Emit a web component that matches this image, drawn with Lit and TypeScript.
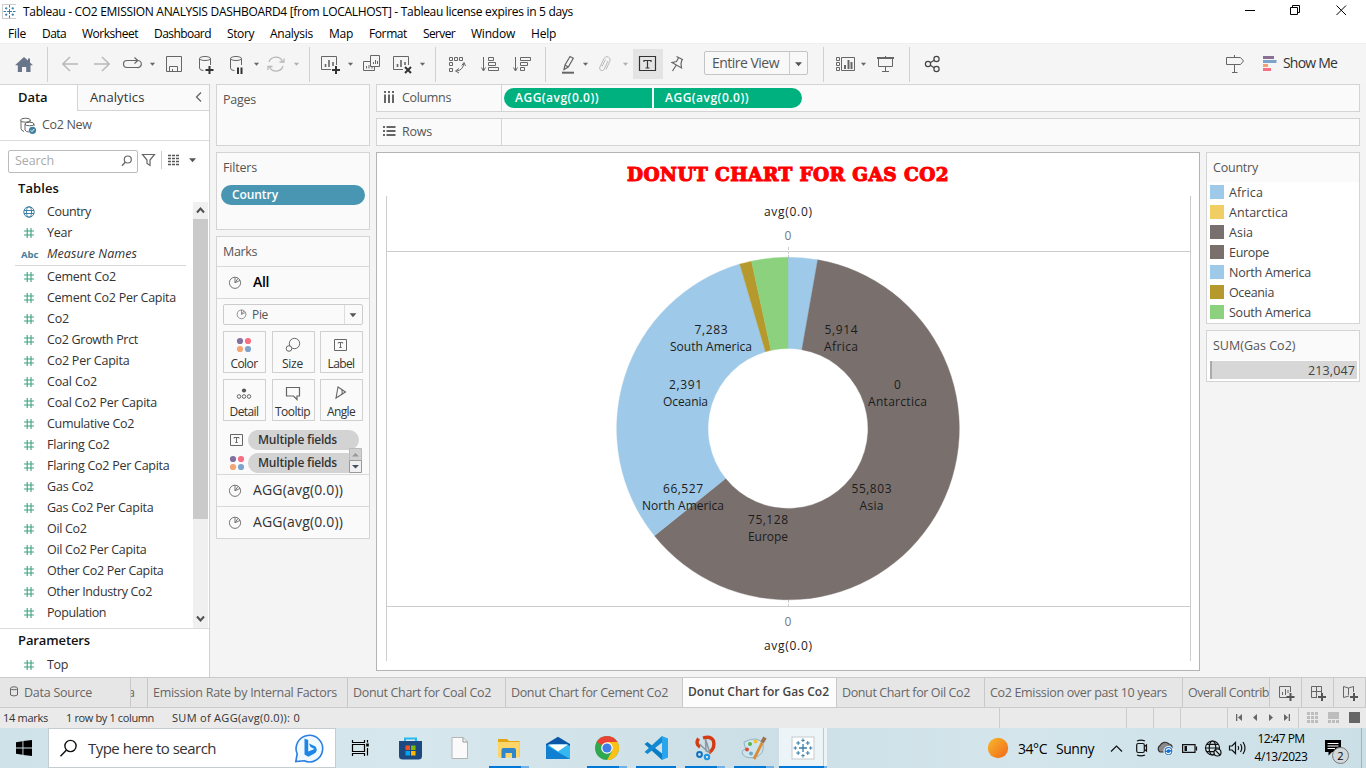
import { LitElement, html, svg, css } from "lit";
import { customElement } from "lit/decorators.js";

/** Text run fitted to a given advance width. */
const t = (text: string, w: number, cls = "") => html`<span class="t ${cls}" data-w=${w}>${text}</span>`;

/** Icon drawn on the window's coordinate grid. */
const ic = (x: number, y: number, w: number, h: number, body: unknown) =>
  html`<svg class="ic" viewBox="${x} ${y} ${w} ${h}" width=${w} height=${h}>${body}</svg>`;

const caret = (cx: number, cy = 64, c = "#666", r = 2.6) =>
  svg`<path d="M${cx - r} ${cy - r / 2}h${2 * r}l${-r} ${r * 1.15}z" fill=${c} stroke="none"/>`;
const sep = (x: number) => svg`<path d="M${x + 0.5} 47V82" stroke="#d0d0d0"/>`;

const FIELDS: [string, number][] = [
  ["Cement Co2", 69], ["Cement Co2 Per Capita", 129], ["Co2", 22], ["Co2 Growth Prct", 91],
  ["Co2 Per Capita", 82.5], ["Coal Co2", 50], ["Coal Co2 Per Capita", 110], ["Cumulative Co2", 87],
  ["Flaring Co2", 62.5], ["Flaring Co2 Per Capita", 122.5], ["Gas Co2", 46.5], ["Gas Co2 Per Capita", 106.5],
  ["Oil Co2", 39.5], ["Oil Co2 Per Capita", 99.5], ["Other Co2 Per Capita", 116.5],
  ["Other Industry Co2", 105], ["Population", 59],
];

const SLICES: { name: string; v: number; c: string; x: number; y: number; vw: number; lw: number }[] = [
  { name: "Africa", v: 5914, c: "#9fc9e8", x: 841, y: 329.5, vw: 33, lw: 34 },
  { name: "Antarctica", v: 0, c: "#f1ce63", x: 897.5, y: 384.5, vw: 7, lw: 59 },
  { name: "Asia", v: 55803, c: "#79706e", x: 871.5, y: 488.5, vw: 40, lw: 24 },
  { name: "Europe", v: 75128, c: "#79706e", x: 768, y: 519.5, vw: 40, lw: 40 },
  { name: "North America", v: 66527, c: "#9fc9e8", x: 683, y: 488.5, vw: 40, lw: 82 },
  { name: "Oceania", v: 2391, c: "#b6992d", x: 685.5, y: 384.5, vw: 33, lw: 45 },
  { name: "South America", v: 7283, c: "#8cd17d", x: 711, y: 329.5, vw: 33, lw: 82 },
];

/** Ring segments; neighbours of one colour are drawn as a single arc. */
function slicePaths() {
  const total = SLICES.reduce((s, d) => s + d.v, 0);
  const [cx, cy, R, r] = [788, 428.5, 171.3, 80];
  const arcs: { v: number; c: string }[] = [];
  for (const d of SLICES.filter((s) => s.v > 0)) {
    const last = arcs[arcs.length - 1];
    if (last && last.c === d.c) last.v += d.v;
    else arcs.push({ v: d.v, c: d.c });
  }
  let a = 0;
  return arcs.map((d) => {
    const b = a + (d.v / total) * 2 * Math.PI;
    const p = (ang: number, rad: number) => `${cx + rad * Math.sin(ang)} ${cy - rad * Math.cos(ang)}`;
    const big = b - a > Math.PI ? 1 : 0;
    const path = `M${p(a, R)}A${R} ${R} 0 ${big} 1 ${p(b, R)}L${p(b, r)}A${r} ${r} 0 ${big} 0 ${p(a, r)}Z`;
    a = b;
    return svg`<path d=${path} fill=${d.c} stroke=${d.c} stroke-width="0.4"/>`;
  });
}

const hash = html`<svg class="ic" width="12" height="12" viewBox="0 0 12 12"><path d="M1 4H11M1 8H11M4.2 1V11M8 1V11" stroke="#3aa381" stroke-width="1.1" fill="none"/></svg>`;
const pieIcon = (s: number) => html`<svg class="ic" width=${s} height=${s} viewBox="0 0 14 14"><path d="M7 1.2A5.6 5.6 0 1 0 12.6 6.8A5.6 5.6 0 0 0 7 1.2V6.8L10 2.4M7 6.8L12 4.4" stroke="#777" fill="none"/></svg>`;
const dots = html`<svg class="ic" width="16" height="16" viewBox="0 0 16 16"><g stroke="none"><circle cx="4" cy="4" r="3.1" fill="#8470a0"/><circle cx="12" cy="4" r="3.1" fill="#f76f80"/><circle cx="4" cy="12" r="3.1" fill="#f4a573"/><circle cx="12" cy="12" r="3.1" fill="#7fa4cc"/></g></svg>`;
const tbox = html`<svg class="ic" width="16" height="14" viewBox="-1 0 16 14"><path d="M.5 1.5H12.5V12.5H.5zM4 5.5V4.5H9V5.5M6.5 4.5V9.5M5.3 9.500H7.700" stroke="#666" fill="none"/></svg>`;

const TOOLBAR = svg`
  <path d="M24 57L15 65.2H17.8V72H22V67H26.2V72H30.5V65.2H33L30 62.5V58.5H28V60.6z" fill="#697689" stroke="none"/>
  ${sep(47)}
  <g stroke="#b8b8b8" stroke-width="1.5"><path d="M78 64H63M70 57L62.8 64L70 71"/><path d="M94 64H109M102 57L109.2 64L102 71"/></g>
  <path d="M128.5 67.5H127a3.4 3.4 0 0 1 0-7H137M134.500 57.500L137.800 60.500L134.500 63.500M138.500 60.500a3.400 3.400 0 0 1-1.500 7H126.500" stroke-width="1.2"/>
  ${caret(152.5)}
  <path d="M166.5 56.5H181.5V71.5H166.5zM169.5 71.5V66.5H177.5V71.5M172.5 69V71.5"/>
  <path d="M199.5 58.5V68q0 2.5 4 2.5M210.5 58.5V65"/><ellipse cx="205" cy="58.5" rx="5.5" ry="2"/>
  <path d="M209.5 66V74M205.5 70H213.5" stroke="#333" stroke-width="2"/>
  <path d="M230.5 58.5V68q0 2.5 4 2.5M241.5 58.5V65"/><ellipse cx="236" cy="58.5" rx="5.5" ry="2"/>
  <path d="M238 67.5V74M241.5 67.5V74" stroke="#333" stroke-width="2"/>
  ${caret(256.5)}
  <g stroke="#b8b8b8" stroke-width="1.3"><path d="M269 62A7.3 7.3 0 0 1 282.6 61.5M283 66A7.3 7.3 0 0 1 269.4 66.8M284 58.5V62H279.5M268 70V66.5H272.5"/></g>
  ${caret(296.5, 64, "#b0b0b0")}
  ${sep(309)}
  <path d="M331 69.5H321.5V56.5H336.5V65"/><path d="M325.5 67V64M329 67V60M333 66V62" stroke-width="1.6"/>
  <path d="M336 66V74M332 70H340" stroke="#333" stroke-width="2"/>
  ${caret(350.5)}
  <path d="M370.5 61.5H363.5V70.5H374.5V66.5H379.5V55.5H370.5V66.5H374.5"/><path d="M366.5 68.5V66M369 68.5V65M372 68.5V67M373.5 64V62M375.5 64V60M377.5 64V61"/>
  <path d="M403 69.5H393.5V56.5H408.5V65"/><path d="M397.5 67V64M401 67V60M405 65V62" stroke-width="1.6"/>
  <path d="M405 67L411 73M411 67L405 73" stroke="#333" stroke-width="2"/>
  ${caret(422.5)}
  ${sep(435)}
  <path d="M449.5 57.5h3v3h-3zM454.5 57.5h3v3h-3zM459.5 57.5h3v3h-3zM449.5 62.5h3v3h-3zM449.5 68.5h3v3h-3z"/><path d="M464 63q-1 7-7 8M461.8 65.5L464 62.5L465.5 66M459 68.5L455.5 71L459 73"/>
  <path d="M483.5 57V70M481.5 67.5L483.5 71L485.5 67.5M488.5 57.5h5v3h-5zM488.5 62.5h7v3h-7zM488.5 67.5h10v3h-10z"/>
  <path d="M515.5 57V70M513.5 67.5L515.5 71L517.5 67.5M520.5 57.5h10v3h-10zM520.5 62.5h7v3h-7zM520.5 67.5h4v3h-4z"/>
  ${sep(545)}
  <path d="M564 69.5L565 65L570 56.500L573.300 58.300L568.300 67zM565 65L568.300 67" stroke-width="1.2"/><path d="M562 72.7H574" stroke-width="2"/>
  ${caret(585.5)}
  <path d="M608 61L604 69.5a2.4 2.4 0 0 1-4.300-2L604 58.500a3.200 3.200 0 0 1 5.800 2.800L606 69.500M602 66.500L605.500 59.500" stroke="#b8b8b8"/>
  ${caret(625.5, 64, "#b0b0b0")}
  <rect x="633" y="49" width="30" height="30" fill="#e4e4e4" stroke="none"/>
  <path d="M639.500 56.500H655.500V70.500H639.500zM644 62V60.500H651V62M647.500 60.500V68M645.500 68H649.500" stroke="#333" stroke-width="1.2"/>
  <path d="M676.500 56.500L683 59.800M678.500 57.800L676.500 61.500L672 62.500L681.500 68L681 63.500L682 59.500M676 65.500L672.500 71" stroke-width="1.2"/>`;

@customElement("app-root")
export class AppRoot extends LitElement {
  static styles = css`
    :host { display: block; width: 1366px; height: 768px; overflow: hidden; background: #f4f4f4;
      font: 12.5px "Open Sans", "Noto Sans", sans-serif; color: #333; }
    * { box-sizing: border-box; }
    .app { display: flex; flex-direction: column; height: 768px; }
    .row { display: flex; align-items: center; }
    .col { display: flex; flex-direction: column; }
    .t { white-space: pre; display: inline-block; line-height: 18px; flex: none; }
    .b { font-weight: 600; color: #111; }
    .i { font-style: italic; }
    .ic { display: block; flex: none; fill: none; stroke: #666; stroke-width: 1; }
    .grow { flex: 1; }
    .title { height: 23px; background: #fff; color: #000; font-size: 12px; flex: none; }
    .title .t { margin-left: 7px; }
    .menu { height: 20px; background: #fff; color: #000; font-size: 12px; padding: 2px 0 0 8px; gap: 16px; flex: none; }
    .tools { height: 41px; background: #f5f5f5; box-shadow: inset 0 1px #efefef; flex: none; }
    .view { width: 104px; height: 24px; border: 1px solid #c4c4c4; border-radius: 2px; background: #f8f8f8; padding-left: 7px; font-size: 14px; color: #555; margin: 0 0 1px 16px; }
    .view .ic { margin-left: auto; }
    .showme { font-size: 14px; margin: 0 29px 2px 6px; }
    .main { display: flex; height: 593px; flex: none; }
    .side { width: 210px; background: #fff; border-top: 1px solid #d4d4d4; border-right: 1px solid #d0d0d0; flex: none; }
    .tabs { height: 26px; font-size: 13px; flex: none; }
    .tabs .on { width: 77px; padding: 0 0 2px 18px; height: 26px; }
    .tabs .off { flex: 1; height: 26px; background: #fafafa; border-left: 1px solid #d4d4d4; border-bottom: 1px solid #d4d4d4; padding: 0 0 1px 12px; }
    .tabs .off .ic { margin-left: auto; }
    .src { height: 30px; border-bottom: 1px solid #dcdcdc; padding-left: 19px; gap: 5px; color: #555; }
    .src .t { margin-bottom: 1px; }
    .find { height: 38px; padding: 2px 0 0 8px; }
    .box { width: 130px; height: 23px; border: 1px solid #bbb; border-radius: 2px; padding: 0 4px 0 6px; color: #aaa; }
    .box .ic { margin-left: auto; }
    .h { height: 23px; padding: 0 0 5px 18px; font-size: 13px; flex: none; }
    .h2 { padding-bottom: 1px; }
    .lists { height: 427px; display: flex; border-bottom: 1px solid #dcdcdc; flex: none; }
    .flds { width: 193px; }
    .f { height: 21px; padding: 0 0 2px 23px; flex: none; }
    .f .k { width: 24px; display: flex; padding-top: 1px; }
    .h2 + .f { margin-top: 3px; }
    .line { height: 1px; margin: 0 7px 1px 15px; background: #d8d8d8; flex: none; }
    .abc { font: bold 9.5px "Open Sans"; color: #447e99; margin-left: -2px; }
    .sb { width: 15px; background: #f0f0f0; }
    .thumb { height: 300px; background: #cacaca; }
    .shelf { width: 154px; margin-left: 6px; gap: 6px; flex: none; }
    .card { border: 1px solid #d4d4d4; background: #fafafa; color: #555; }
    .ch { height: 29px; padding-left: 6px; flex: none; }
    .pages { height: 62px; flex: none; }
    .filters { height: 78px; flex: none; }
    .marks { height: 303px; flex: none; }
    .pill { height: 20px; border-radius: 10px; display: flex; align-items: center; font-weight: 600; font-size: 12px; }
    .blue { margin: 3px 4px; background: #4996b2; color: #fff; padding-left: 11px; }
    .mr { height: 32px; border-top: 1px solid #d8d8d8; padding-left: 11px; gap: 11px; font-size: 14px; color: #333; flex: none; }
    .mr .t { margin-bottom: 2px; }
    .mr .b { color: #000; }
    .card2 { border-top: 1px solid #d8d8d8; height: 176px; padding: 5px 6px 0; flex: none; }
    .sel { height: 21px; border: 1px solid #ccc; border-radius: 2px; padding-left: 12px; gap: 5px; flex: none; font-size: 12px; }
    .sel .ic:last-child { margin-left: auto; }
    .btns { display: grid; grid-template-columns: 43px 43px 43px; gap: 6px 5.5px; margin-top: 6px; font-size: 12px; color: #333; }
    .btn { height: 42px; border: 1px solid #d0d0d0; display: flex; flex-direction: column; align-items: center; padding: 5px 1px 0 0; gap: 3px; }
    .btn .t { line-height: 16px; }
    .enc { height: 20px; margin-top: 9px; gap: 4px; padding-left: 6px; }
    .enc + .enc { margin-top: 3px; }
    .enc .pill { background: #d3d3d3; width: 111px; padding-left: 10px; color: #333; margin-left: -1px; }
    .enc .cut { width: 102px; border-radius: 10px 0 0 10px; }
    .enc .spin { margin: -5px 0 0 -5px; }
    .work { width: 990px; padding-left: 6px; gap: 6px; flex: none; }
    .sh { height: 28px; display: flex; flex: none; width: 984px; }
    .sl { width: 125px; border-right: 1px solid #d4d4d4; padding-left: 6px; gap: 6px; color: #555; }
    .pills { padding-left: 2px; gap: 2px; }
    .g { background: #00b180; color: #fff; width: 148px; padding-left: 11px; }
    .g1 { border-radius: 10px 0 0 10px; }
    .g2 { border-radius: 0 10px 10px 0; }
    .lower { display: flex; gap: 6px; align-items: flex-start; }
    .canvas { width: 824px; height: 519px; background: #fff; border: 1px solid #b4b4b4; flex: none; align-items: center; }
    .ttl { color: #f00; font: bold 18.5px/22px "DejaVu Serif", serif; -webkit-text-stroke: 1.1px #f00; margin: 11px 0 6px; height: 22px; }
    .ttl .t { line-height: 22px; }
    .canvas text { font: 12px "Open Sans", sans-serif; fill: #1c1c1c; stroke: none; text-anchor: middle; }
    .canvas .ax { fill: #777; }
    .legs { gap: 6px; width: 154px; }
    .leg { height: 172px; background: #fff; color: #444; }
    .leg .ch, .sum .ch { background: #fafafa; color: #555; }
    .lr { height: 20px; padding-left: 3px; gap: 5px; }
    .lr .t { margin-top: 2px; }
    .sum { height: 52px; background: #fff; color: #444; }
    .bar { margin: 1px 2px 0 3px; height: 18px; background: #d7d7d7; border-left: 2px solid #aaa; justify-content: flex-end; padding: 1px 2px 0 0; }
    .sheets { height: 30px; background: #e6e6e6; border-top: 1px solid #cacaca; color: #666; flex: none; }
    .st { height: 29px; padding-left: 5px; border-right: 1px solid #c8c8c8; overflow: hidden; flex: none; }
    .st.src0 { width: 131px; }
    .st.prev { width: 17px; padding: 0 12px 0 0; justify-content: flex-end; }
    .st.act { background: #fcfcfc; padding-bottom: 1px; font-weight: 600; font-size: 12px; color: #444; }
    .status { height: 21px; background: #eaeaea; border-top: 1px solid #cacaca; font-size: 11px; gap: 18px; padding-left: 3px; flex: none; }
    .status .ic { margin-left: auto; }
    .task { height: 40px; background: linear-gradient(90deg, #cfe2e9, #d6e8ed 30%, #cddfe6 55%, #d4e6ec 75%, #cbdfe7); flex: none; color: #000; }
    .q { width: 288px; height: 40px; background: #fff; border: 1px solid #c6cdd0; padding-left: 10px; gap: 10px; font-size: 15px; color: #333; }
    .q .ic:last-child { margin-left: auto; }
    .wx { font-size: 14px; gap: 9px; padding: 2px 0 0 9px; }
    .clock { width: 62px; font-size: 12px; align-items: center; }
  `;

  firstUpdated() {
    const fit = () =>
      this.renderRoot.querySelectorAll<HTMLElement>(".t[data-w]").forEach((el) => {
        el.style.letterSpacing = "0px";
        const n = (el.textContent || "").length;
        const w = Number(el.dataset.w);
        if (n > 1) el.style.letterSpacing = `${(w - el.getBoundingClientRect().width) / n}px`;
      });
    fit();
    document.fonts?.ready.then(fit);
  }

  sidebar() {
    return html`<div class="side col">
      <div class="tabs row">
        <div class="on row">${t("Data", 29.5, "b")}</div>
        <div class="off row">${t("Analytics", 54.5)}${ic(194, 90, 15, 14, svg`<path d="M201 92.5L196.500 97L201 101.500" stroke-width="1.3"/>`)}</div>
      </div>
      <div class="src row">
        ${ic(19, 116, 18, 18, svg`<path d="M21 119.500V127.500q0 2 3 3M30 119V121"/><ellipse cx="25.500" cy="119.200" rx="5" ry="2"/><path d="M25 123V129q1 2 4 2M34 123V125"/><ellipse cx="29.500" cy="123" rx="4.500" ry="1.800"/><circle cx="32.500" cy="129.300" r="3.600" fill="#4080a0" stroke="none"/><path d="M30.800 129.300L32 130.600L34.300 128" stroke="#fff"/>`)}
        ${t("Co2 New", 49.5)}
      </div>
      <div class="find row">
        <div class="box row">${t("Search", 39)}${ic(118, 150, 14, 20, svg`<circle cx="126.800" cy="158.500" r="3.500" stroke-width="1.2"/><path d="M124.200 161.200L121 164.800" stroke-width="1.3"/>`)}</div>
        ${ic(138, 150, 70, 22, svg`<path d="M142.500 154.500H154.500L150 160V165.500L147 163.500V160z" stroke-width="1.2"/><path d="M161.500 151V169" stroke="#ccc"/><path d="M168 155.500H180M168 158.500H180M168 161.500H180M168 164.500H180" stroke-dasharray="3 1" stroke="#555" stroke-width="1.300"/>${caret(192.5, 160, "#555", 3.5)}`)}
      </div>
      <div class="h row">${t("Tables", 41, "b")}</div>
      <div class="lists">
        <div class="flds col">
          <div class="f row"><span class="k">${ic(22, 206, 12, 12, svg`<g stroke="#4080a0"><circle cx="28" cy="212" r="5.200"/><ellipse cx="28" cy="212" rx="2.500" ry="5.200"/><path d="M23 210.500H33M23 213.500H33"/></g>`)}</span>${t("Country", 44)}</div>
          <div class="f row"><span class="k">${hash}</span>${t("Year", 25)}</div>
          <div class="f row"><span class="k"><span class="abc">Abc</span></span>${t("Measure Names", 90, "i")}</div>
          <div class="line"></div>
          ${FIELDS.map(([n, w]) => html`<div class="f row"><span class="k">${hash}</span>${t(n, w)}</div>`)}
        </div>
        <div class="sb">
          ${ic(193, 202, 15, 17, svg`<path d="M197 212.500L200.500 208.500L204 212.500" stroke-width="2" stroke="#505050"/>`)}
          <div class="thumb"></div>
          ${ic(193, 519, 15, 107, svg`<path d="M197 616.500L200.500 620.500L204 616.500" stroke-width="2" stroke="#505050"/>`)}
        </div>
      </div>
      <div class="h h2 row">${t("Parameters", 72, "b")}</div>
      <div class="f row"><span class="k">${hash}</span>${t("Top", 21)}</div>
    </div>`;
  }

  shelves() {
    const btn = (icon: unknown, n: string, w: number) => html`<div class="btn">${icon}${t(n, w)}</div>`;
    return html`<div class="shelf col">
      <div class="card pages"><div class="ch row">${t("Pages", 33)}</div></div>
      <div class="card filters"><div class="ch row">${t("Filters", 34)}</div><div class="pill blue">${t("Country", 46)}</div></div>
      <div class="card marks col">
        <div class="ch row">${t("Marks", 34)}</div>
        <div class="mr row">${pieIcon(14)}${t("All", 16, "b")}</div>
        <div class="card2 col">
          <div class="sel row">${pieIcon(11)}${t("Pie", 16)}${ic(344, 304, 18, 19, svg`<path d="M344.500 304V323" stroke="#ddd"/>${caret(353, 314, "#555", 3.4)}`)}</div>
          <div class="btns">
            ${btn(dots, "Color", 27)}
            ${btn(html`<svg class="ic" width="16" height="16" viewBox="0 0 16 16"><circle cx="9.500" cy="6.500" r="5.200"/><circle cx="4" cy="11.500" r="2.800" fill="#fafafa"/></svg>`, "Size", 21)}
            ${btn(html`<svg class="ic" width="16" height="16" viewBox="0 -1 16 14"><path d="M1.500 0.500H13.500V11.500H1.500zM5.300 4.500V3.500H9.700V4.500M7.500 3.500V8.500M6.300 8.500H8.700"/></svg>`, "Label", 27)}
            ${btn(html`<svg class="ic" width="16" height="16" viewBox="0 0 16 16"><circle cx="8" cy="5.500" r="2.100" fill="#555" stroke="none"/><circle cx="3" cy="11.500" r="1.800"/><circle cx="8" cy="11.500" r="1.800"/><circle cx="13" cy="11.500" r="1.800"/></svg>`, "Detail", 29)}
            ${btn(html`<svg class="ic" width="16" height="16" viewBox="0 0 16 16"><path d="M1.500 2.500H14.500V11H12V14.500L8.500 11H1.500z" stroke-width="1.200"/></svg>`, "Tooltip", 35)}
            ${btn(html`<svg class="ic" width="16" height="16" viewBox="0 0 16 16"><path d="M5 2L12.500 7L3 13zM8 9.900Q10.300 8.500 8.500 4.400" stroke-width="1.100"/></svg>`, "Angle", 28)}
          </div>
          <div class="enc row">${tbox}<div class="pill">${t("Multiple fields", 79)}</div></div>
          <div class="enc row">${dots}<div class="pill cut">${t("Multiple fields", 79)}</div>
            <svg class="ic spin" width="13" height="25" viewBox="0 0 13 25"><path d="M.5 .5H12.500V12.500H.5z" fill="#d0d0d0" stroke="#bbb"/><path d="M.5 12.500H12.500V24.500H.5z" fill="#f0f0f0" stroke="#999"/><path d="M3 8.500L6.500 5L10 8.500z" fill="#999" stroke="none"/><path d="M3 17L6.500 20.500L10 17z" fill="#425066" stroke="none"/></svg>
          </div>
        </div>
        <div class="mr row">${pieIcon(14)}${t("AGG(avg(0.0))", 90)}</div>
        <div class="mr row">${pieIcon(14)}${t("AGG(avg(0.0))", 90)}</div>
      </div>
    </div>`;
  }

  workspace() {
    const leg: [string, number][] = [["Africa", 34], ["Antarctica", 59], ["Asia", 24], ["Europe", 40], ["North America", 82], ["Oceania", 45], ["South America", 82]];
    return html`<div class="work col">
      <div class="card sh">
        <div class="sl row">${ic(382, 91, 13, 14, svg`<path d="M384 91V93M388 91V93M392 91V93M384 94.500V103M388 94.500V103M392 94.500V103" stroke-width="2"/>`)}${t("Columns", 49)}</div>
        <div class="pills row"><div class="pill g g1">${t("AGG(avg(0.0))", 84)}</div><div class="pill g g2">${t("AGG(avg(0.0))", 84)}</div></div>
      </div>
      <div class="card sh"><div class="sl row">${ic(382, 125, 13, 14, svg`<path d="M382 127H384M382 131H384M382 135H384M385.500 127H394.500M385.500 131H394.500M385.500 135H394.500" stroke-width="2"/>`)}${t("Rows", 30)}</div></div>
      <div class="lower">
        <div class="canvas col">
          <div class="ttl">${t("DONUT CHART FOR GAS CO2", 322)}</div>
          <svg class="ic" width="822" height="476" viewBox="377 192 822 476">
            <path d="M386.500 196V661M1190.500 196V661M386 251.500H1190M386 606.500H1190" stroke="#ccc"/>
            <path d="M788.500 247V258M788.500 600V607" stroke="#ccc" stroke-dasharray="3 1"/>
            <text x="788" y="216" textLength="48">avg(0.0)</text><text class="ax" x="788" y="240">0</text>
            <text class="ax" x="788" y="626">0</text><text x="788" y="650" textLength="48">avg(0.0)</text>
            ${slicePaths()}
            ${SLICES.map((d) => svg`<text x=${d.x} y=${d.y + 4.5} textLength=${d.vw}>${d.v.toLocaleString("en-US")}</text><text x=${d.x} y=${d.y + 21.5} textLength=${d.lw}>${d.name}</text>`)}
          </svg>
        </div>
        <div class="legs col">
          <div class="card leg"><div class="ch row">${t("Country", 45)}</div>
            ${leg.map(([n, w], i) => html`<div class="lr row"><svg width="14" height="14"><rect width="14" height="14" fill=${SLICES[i].c}></rect></svg>${t(n, w)}</div>`)}
          </div>
          <div class="card sum"><div class="ch row">${t("SUM(Gas Co2)", 82.5)}</div><div class="bar row">${t("213,047", 47)}</div></div>
        </div>
      </div>
    </div>`;
  }

  taskbar() {
    const petals = (cx: number, cy: number) => svg`<g stroke="#3a7ca5" stroke-width="1.3" transform="translate(${cx} ${cy})">
      <path d="M0-4V4M-4 0H4"/><path stroke-width="1" d="M0-9.500V-6M-1.700-7.700H1.700M0 9.500V6M-1.700 7.700H1.700M-9.500 0H-6M-7.700-1.700V1.700M9.500 0H6M7.700-1.700V1.700M-4.800-7V-3M-6.800-5H-2.800M4.800-7V-3M6.800-5H2.800M-4.800 7V3M-6.800 5H-2.800M4.800 7V3M6.800 5H2.800"/></g>`;
    const under = (x: number, w = 40, light = 8) => svg`<path d="M${x} 767H${x + w - light}" stroke="#0078d7" stroke-width="2"/><path d="M${x + w - light} 767H${x + w}" stroke="#6fb0e6" stroke-width="2"/>`;
    return html`<div class="task row">
      ${ic(0, 728, 48, 40, svg`<path d="M16 742.200L22.500 741.300V747.500H16zM23.400 741.100L32 740V747.500H23.400zM16 748.400H22.500V754.700L16 753.800zM23.400 748.400H32V756L23.400 754.900z" fill="#000" stroke="none"/>`)}
      <div class="q row">
        ${ic(59, 738, 19, 20, svg`<circle cx="70.500" cy="746" r="5.600" stroke="#111" stroke-width="1.400"/><path d="M66.500 750L60.500 756.200" stroke="#111" stroke-width="1.500"/>`)}
        ${t("Type here to search", 128)}
        ${ic(292, 731, 43, 34, svg`<path d="M295.800 761.500L297.200 754A13.300 13.300 0 1 1 304 760.800z" fill="#f0f9fe" stroke="#2c7fe0" stroke-width="1.600"/><path d="M304.500 738.500L308.200 740V751.500L314.500 749L310.500 747L309 743.600L315.500 746.400Q318.500 751 314 753.800L308.300 756.800L304.500 754.500z" fill="#1b86e8" stroke="none"/>`)}
      </div>
      ${ic(336, 728, 492, 40, svg`
        <rect x="779" y="728" width="48" height="40" fill="#edf4f7" stroke="none"/><path d="M823.500 728V766" stroke="#bccbd2"/>
        <g stroke="#000" stroke-width="1.200"><path d="M352.500 740V742.500H364.500V740M352.500 756V753.500H364.500V756M352.500 744.500H364.500V751.500H352.500z"/><path d="M367.500 740V742.500M367.500 748V755.500"/><path d="M367.500 743.500V746.500" stroke-width="2.600"/></g>
        <path d="M405 742V738.500H416V742" stroke="#28b8f0" stroke-width="2"/><path d="M399 741H422V756q0 3.500-3.500 3.500H402.500q-3.500 0-3.500-3.500z" fill="#1c4a80" stroke="none"/>
        <g stroke="none"><rect x="405.500" y="745.500" width="4.500" height="4.500" fill="#f25022"/><rect x="411" y="745.500" width="4.500" height="4.500" fill="#7fba00"/><rect x="405.500" y="751" width="4.500" height="4.500" fill="#00a4ef"/><rect x="411" y="751" width="4.500" height="4.500" fill="#ffb900"/></g>
        <path d="M452 737.500H463L467.500 742V758.500H452z" fill="#fafafa" stroke="#b5b5b5"/><path d="M463 737.500V742H467.500" stroke="#999"/>
        <g stroke="none"><path d="M498 739H507L509 741H519.500V757H498z" fill="#e3a416"/><rect x="498" y="742" width="21.500" height="15.500" fill="#fdd568"/><path d="M501.500 758V750q0-2 2-2H514q2 0 2 2V758H512V753H505.500V758z" fill="#2f86cc"/></g>
        <g stroke="none"><path d="M546 744L558 736.800L570 744V747H546z" fill="#0a57a8"/><path d="M546 746L553 744H566L570 746V759H546z" fill="#35b8f2"/><path d="M548 744.500H568L558 751.500z" fill="#fff"/><path d="M546 745L563 755L570 759H546z" fill="#1280d0"/></g>
        <g stroke="none"><circle cx="607" cy="748" r="12" fill="#2fa84f"/><path d="M607 748L596.600 742A12 12 0 0 1 617.400 742z" fill="#ea4335"/><path d="M607 742H617.400A12 12 0 0 1 607 760L612.200 751z" fill="#fbc116"/><circle cx="607" cy="748" r="5.800" fill="#fff"/><circle cx="607" cy="748" r="4.600" fill="#3f7de8"/></g>
        <g stroke="none"><path d="M662 736L668 738.500V757.500L662 760z" fill="#29a5ee"/><path d="M644.500 744L647.500 742L662 753.500V760z" fill="#0a7cc4"/><path d="M644.500 752L647.500 754L662 742.500V736z" fill="#1189d3"/></g>
        <g><path d="M698.500 738.500Q695 744 700 747M703 738Q711 735.500 713.500 741Q715.500 748 709 753" stroke="#d43b12" stroke-width="3.400"/><path d="M705.500 739L709.500 752L706 751zM699.500 744L708 752" stroke="#8a97a0" stroke-width="1.500" fill="#d5dde2"/><circle cx="699.500" cy="754.500" r="2.400" stroke="#1170c4" stroke-width="2"/><circle cx="707" cy="757" r="2.200" stroke="#2095e0" stroke-width="2"/></g>
        <g><path d="M744 742Q758 735 763 744Q765 754 755 757.500Q743 759 742 752Q743 749.500 746 749Q744 745 744 742z" fill="#cfe5ee" stroke="#8db2c0"/><g stroke="none"><circle cx="747" cy="749.500" r="2" fill="#e04a3a"/><circle cx="750" cy="744" r="2" fill="#59b448"/><circle cx="755.500" cy="741.500" r="2" fill="#f1c232"/><circle cx="751" cy="753.500" r="2" fill="#6fa8c4"/></g><path d="M762 743L754 759" stroke="#dd8a35" stroke-width="2.800"/><path d="M765 737.500L762 742.500" stroke="#9a7350" stroke-width="3.800"/></g>
        <rect x="792" y="737" width="22" height="22" fill="#fff" stroke="#c5ccd0"/>${petals(803, 748)}
        ${under(489)}${under(587)}${under(636, 40, 0)}${under(685)}${under(734)}${under(779, 48, 3)}`)}
      <div class="grow"></div>
      ${ic(987, 736, 22, 24, svg`<defs><linearGradient id="sun" x1="0" y1="0" x2="1" y2="1"><stop offset="0" stop-color="#f9b82c"/><stop offset="1" stop-color="#f0681a"/></linearGradient></defs><circle cx="998" cy="748" r="10.200" fill="url(#sun)" stroke="none"/>`)}
      <div class="wx row">${t("34°C", 29)}${t("Sunny", 38)}</div>
      ${ic(1094, 728, 156, 40, svg`<g stroke="#111" stroke-width="1.200"><path d="M1111 751.500L1116.500 746L1122 751.500"/>
        <rect x="1136.700" y="743.500" width="7.600" height="9" rx="1.500"/><path d="M1144.500 746.500L1146.500 745V751L1144.500 749.500M1137 741Q1141 739.300 1145 741M1137 755Q1141 756.700 1145 755"/>
        <path d="M1160 752a3.800 3.800 0 0 1 0-6.500a5.500 5.500 0 0 1 9-1.500q3.500 .5 3 4L1168 752z" fill="#8a8a8a" stroke="#333"/><circle cx="1168.500" cy="751" r="4.500" fill="#1572cf" stroke="#e8f2f6"/><path d="M1166 750.500a2.800 2.800 0 0 1 5-.5M1171 751.800a2.800 2.800 0 0 1-5 .5" stroke="#fff"/>
        <path d="M1182.600 744.600H1195V752.400H1182.600zM1196.500 746.500V750.500"/><rect x="1184.500" y="746" width="2.500" height="5" fill="#111" stroke="none"/>
        <circle cx="1212.500" cy="748" r="7"/><ellipse cx="1212.500" cy="748" rx="3.300" ry="7"/><path d="M1205.500 748H1219.500M1207 744.300H1218M1207 751.700H1217.500"/><circle cx="1217.500" cy="752.500" r="3.500" fill="#d4e6ec"/><path d="M1215.200 750.200L1220 755"/>
        <path d="M1229.500 746H1232L1235.500 742.500V753.500L1232 750H1229.500zM1238 746Q1239.500 748 1238 750M1240.500 744Q1243 748 1240.500 752M1243 742Q1247 748 1243 754"/></g>`)}
      <div class="clock col">${t("12:47 PM", 47)}${t("4/13/2023", 53)}</div>
      ${ic(1312, 728, 54, 40, svg`<path d="M1325 740H1341V752H1332L1328.500 755.500V752H1325z" fill="#000" stroke="none"/><path d="M1327.500 743.500H1338.500M1327.500 746H1338.500M1327.500 748.500H1335" stroke="#fff"/><circle cx="1340.500" cy="755.500" r="8" fill="#d3d8db" stroke="#777"/><text x="1340.500" y="759.500" text-anchor="middle" font-size="11" fill="#000" stroke="none">2</text><path d="M1361.500 728V768" stroke="#9fb3bc"/>`)}
    </div>`;
  }

  render() {
    const menus: [string, number][] = [["File", 18], ["Data", 24], ["Worksheet", 56], ["Dashboard", 57], ["Story", 27], ["Analysis", 43], ["Map", 24], ["Format", 38], ["Server", 32], ["Window", 44], ["Help", 25]];
    const sheets: [string, number, number][] = [["Emission Rate by Internal Factors", 184, 200], ["Donut Chart for Coal Co2", 138, 158], ["Donut Chart for Cement Co2", 157, 177], ["Donut Chart for Gas Co2", 141, 154], ["Donut Chart for Oil Co2", 128, 148], ["Co2 Emission over past 10 years", 177, 198], ["Overall Contrib", 81, 87]];
    return html`<div class="app">
      <div class="title row">
        ${ic(0, 0, 16, 23, svg`<rect x="2.500" y="4.500" width="14" height="14" fill="#fff" stroke="#ccc"/><path d="M9.500 9V14M7 11.500H12M9.500 5V7.500M9.500 15.500V18M3.500 11.500H6M13 11.500H15.500M6.200 7.200V9.500M5 8.300H7.400M12.800 7.200V9.500M11.600 8.300H14M6.200 13.500V15.800M5 14.700H7.400M12.800 13.500V15.800M11.600 14.700H14" stroke="#2f7fa8"/>`)}
        ${t("Tableau - CO2 EMISSION ANALYSIS DASHBOARD4 [from LOCALHOST] - Tableau license expires in 5 days", 550)}
        <div class="grow"></div>
        ${ic(1220, 0, 146, 23, svg`<g stroke="#000"><path d="M1245 10.500H1255M1290.500 7.500H1297.500V14.500H1290.500zM1292.500 7V5.500H1299.500V12.500H1298M1336.500 5.500L1346 15M1346 5.500L1336.500 15"/></g>`)}
      </div>
      <div class="menu row">${menus.map(([n, w]) => t(n, w))}</div>
      <div class="tools row">
        ${ic(0, 43, 688, 41, TOOLBAR)}
        <div class="view row">${t("Entire View", 67)}${ic(788, 52, 19, 22, svg`<path d="M789.500 52V74" stroke="#ccc"/>${caret(798.5, 64, "#555", 3.5)}`)}</div>
        ${ic(808, 43, 140, 41, svg`${sep(823)}
          <path d="M836.500 57.500h3v3h-3zM836.500 62.500h3v3h-3zM836.500 67.500h3v3h-3zM841.500 57.500H854.500V70.500H841.500z"/><path d="M845 69V65M848.500 69V60M851.500 69V62" stroke-width="2"/>
          ${caret(863.5)}
          <path d="M877 58H894" stroke-width="2"/><path d="M878.500 58V66.500H892.500V58M885.500 67V71.500M882 71.500H889M885.500 56V58"/>
          ${sep(909)}
          <g stroke="#444" stroke-width="1.200"><circle cx="928" cy="64" r="2.600"/><circle cx="936.500" cy="59" r="2.600"/><circle cx="936.500" cy="69" r="2.600"/><path d="M930.300 62.800L934.200 60.300M930.300 65.200L934.200 67.700"/></g>`)}
        <div class="grow"></div>
        ${ic(1200, 43, 77, 41, svg`<path d="M1226.500 57.500H1240.500L1243.500 61L1240.500 64.500H1226.500zM1234.500 55V57.500M1234.500 64.500V72.500M1232 72.500H1237.500"/><g stroke="none"><rect x="1263" y="56" width="11" height="3" fill="#8a6f95"/><rect x="1263" y="60" width="13.500" height="3" fill="#7da3cc"/><rect x="1263" y="64" width="5" height="3" fill="#f2a271"/><rect x="1263" y="68" width="8" height="3" fill="#f76f80"/></g>`)}
        <div class="showme">${t("Show Me", 54)}</div>
      </div>
      <div class="main">${this.sidebar()}${this.shelves()}${this.workspace()}</div>
      <div class="sheets row">
        <div class="st src0 row">${ic(5, 680, 19, 26, svg`<path d="M10.500 688.500V695q3.500 2 7 0V688.500"/><ellipse cx="14" cy="688.300" rx="3.500" ry="1.500"/>`)}${t("Data Source", 68)}</div>
        <div class="st prev row"><span class="t">a</span></div>
        ${sheets.map(([n, w, cw]) => html`<div class="st row ${cw === 154 ? "act" : ""}" style="width:${cw}px">${t(n, w)}</div>`)}
        ${ic(1270, 678, 96, 29, svg`<path d="M1288 697.500H1279.500V686.500H1290.500V692M1282.500 695V692M1285.500 695V689M1288 693V690"/><path d="M1301.500 678V707M1333.500 678V707M1365.500 678V707" stroke="#c8c8c8"/><path d="M1317 697.500H1311.500V686.500H1321.500V693M1311.500 691.500H1321.500M1316.500 686.500V697"/><path d="M1349 696L1343.500 697.500V686.500L1348.500 688L1353.500 686.500V692M1348.500 688V695"/><path d="M1290.500 693V701M1286.500 697H1294.500M1322 693V701M1318 697H1326M1354 693V701M1350 697H1358" stroke="#555" stroke-width="2"/>`)}
      </div>
      <div class="status row">
        ${t("14 marks", 45)}${t("1 row by 1 column", 88)}${t("SUM of AGG(avg(0.0)): 0", 128)}
        ${ic(990, 708, 376, 20, svg`<path d="M999.500 708V728M1126.500 708V728M1153.500 708V728M1180.500 708V728M1227.500 708V728M1298.500 708V728" stroke="#ccc"/>
          <g fill="#666" stroke="none"><path d="M1236 714h1.300v7h-1.300zM1242 714V721L1238 717.500zM1257 714V721L1253 717.500zM1269 714V721L1273 717.500zM1284 714V721L1288 717.500zM1288.700 714h1.300v7h-1.300z"/><rect x="1349" y="712" width="11" height="11"/></g>
          <g fill="#bdbdbd" stroke="none"><path d="M1307 712h3v3h-3zM1311 712h3v3h-3zM1315 712h3v3h-3zM1307 716h3v3h-3zM1311 716h3v3h-3zM1315 716h3v3h-3zM1307 720h3v3h-3zM1311 720h3v3h-3zM1315 720h3v3h-3zM1328 712h11v7h-11zM1328 720h3v3h-3zM1332 720h3v3h-3zM1336 720h3v3h-3z"/></g>`)}
      </div>
      ${this.taskbar()}
    </div>`;
  }
}
